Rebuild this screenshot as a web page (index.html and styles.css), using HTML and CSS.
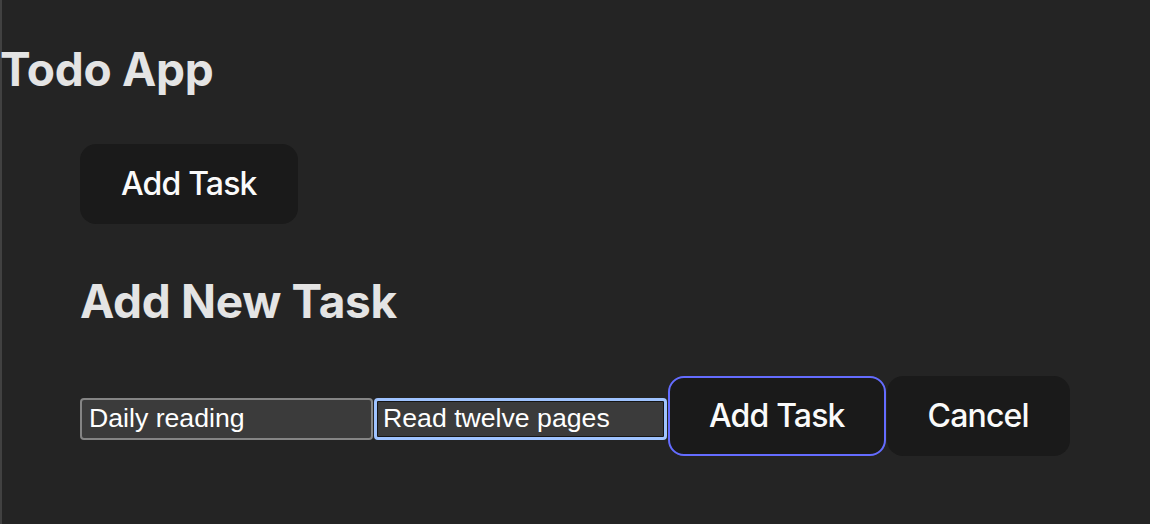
FILE: index.html
```html
<!DOCTYPE html>
<html lang="en">
<head>
<meta charset="utf-8">
<title>Todo App</title>
<link rel="stylesheet" href="styles.css">
</head>
<body>
  <div class="app">
    <h1 class="title">Todo App</h1>
    <div class="content">
      <button class="btn">Add Task</button>
      <h2 class="subtitle">Add New Task</h2>
      <form class="task-form">
        <input class="field" type="text" value="Daily reading">
        <input class="field field-focus" type="text" value="Read twelve pages">
        <button class="btn btn-primary" type="button">Add Task</button>
        <button class="btn" type="button">Cancel</button>
      </form>
    </div>
  </div>
</body>
</html>
```

FILE: styles.css
```css
html, body {
  margin: 0;
  padding: 0;
  background: #242424;
}

body {
  min-height: 100vh;
  box-shadow: inset 2px 0 0 #414141;
  font-family: Inter, "Noto Sans", sans-serif;
  color: rgba(255, 255, 255, 0.87);
}

.app {
  padding-top: 41px;
}

.title {
  margin: 0;
  font-size: 46px;
  font-weight: 700;
  line-height: 56px;
  color: #e4e4e4;
  letter-spacing: -0.3px;
}

.content {
  padding-left: 80px;
  margin-top: 47px;
  display: flex;
  flex-direction: column;
  align-items: flex-start;
}

.btn {
  font-family: Inter, "Noto Sans", sans-serif;
  font-size: 32px;
  font-weight: 500;
  line-height: 38px;
  letter-spacing: -0.85px;
  padding: 19px 39px;
  border: 2px solid transparent;
  border-radius: 16px;
  background: #1a1a1a;
  color: #fafafa;
  cursor: pointer;
}

.btn-primary {
  border-color: #646cff;
}

.subtitle {
  margin: 49px 0 0 0;
  font-size: 46px;
  font-weight: 700;
  line-height: 56px;
  color: #e4e4e4;
  letter-spacing: -0.3px;
}

.task-form {
  margin-top: 47px;
  display: flex;
  align-items: baseline;
  gap: 1px;
}

.field {
  box-sizing: border-box;
  width: 293px;
  height: 42px;
  padding: 0 7px;
  border: 2px solid #858585;
  border-radius: 4px;
  background: #3b3b3b;
  color: #ffffff;
  font-family: "Liberation Sans", Arial, sans-serif;
  font-size: 26.67px;
  outline: none;
}

.field-focus {
  border: 3px solid #9fc3ff;
  box-shadow: inset 0 0 0 1px #151515;
  padding: 0 6px;
}
```
